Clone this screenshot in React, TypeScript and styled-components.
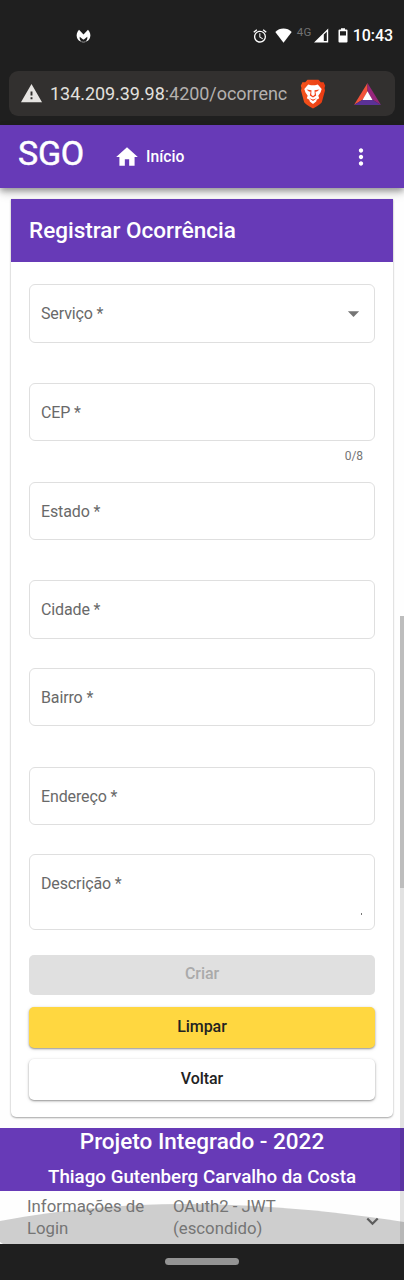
import React from "react";
import styled, { createGlobalStyle } from "styled-components";
import {
  MdAlarm,
  MdArrowDropDown,
  MdHome,
  MdMoreVert,
  MdWarning,
} from "react-icons/md";

const PURPLE = "#673ab7";

const GlobalStyle = createGlobalStyle`
  * { box-sizing: border-box; }
  body {
    margin: 0;
    background: #fff;
    font-family: Roboto, "Liberation Sans", sans-serif;
    overflow: hidden;
  }
`;

const Phone = styled.div`
  position: relative;
  display: flex;
  flex-direction: column;
  width: 404px;
  height: 1280px;
  background: #fefefe;
`;

const SystemTop = styled.div`
  display: flex;
  flex-direction: column;
  height: 125px;
  padding: 0 9px;
  background: #1f1f1f;
`;

const StatusBar = styled.div`
  display: flex;
  align-items: center;
  height: 71px;
  padding-left: 67px;
  padding-right: 2px;
  color: #fff;
  svg { display: block; flex: none; }
`;

const StatusRight = styled.div`
  display: flex;
  align-items: center;
  margin-left: auto;
`;

const Network = styled.span`
  margin: -7px 2px 0 5px;
  font-size: 11.5px;
  line-height: 14px;
  letter-spacing: 0.3px;
  color: #727272;
`;

const Clock = styled.span`
  margin-left: 5px;
  font-size: 16px;
  font-weight: 500;
  line-height: 20px;
  letter-spacing: -0.05px;
`;

const AddressBar = styled.div`
  display: flex;
  align-items: center;
  height: 45px;
  padding: 0 14px 0 11px;
  border-radius: 9px;
  background: #32302f;
  color: #e6e4e2;
  svg { display: block; flex: none; }
`;

const Url = styled.div`
  width: 242px;
  margin-left: 7px;
  font-size: 18px;
  line-height: 24px;
  letter-spacing: -0.05px;
  white-space: nowrap;
  color: #e2e0de;
  span { color: #b4b1af; }
`;

const Spacer = styled.span<{ $width?: number }>`
  flex: ${(p) => (p.$width ? `0 0 ${p.$width}px` : "1")};
`;

const Toolbar = styled.header`
  position: relative;
  z-index: 1;
  display: flex;
  align-items: center;
  height: 63px;
  flex: none;
  padding: 0 30px 0 18px;
  background: ${PURPLE};
  color: #fff;
  box-shadow: 0 3px 6px rgba(0, 0, 0, 0.32), 0 5px 10px rgba(0, 0, 0, 0.14);
  svg { display: block; }
`;

const Brand = styled.div`
  width: 96px;
  margin-top: -7px;
  font-size: 34px;
  line-height: 40px;
  letter-spacing: -0.3px;
  -webkit-text-stroke: 0.5px #fff;
`;

const HomeLink = styled.div`
  display: flex;
  align-items: center;
  gap: 6px;
  flex: 1;
  font-size: 15.7px;
  font-weight: 500;
  line-height: 20px;
`;

const Card = styled.section`
  position: relative;
  z-index: 1;
  display: flex;
  flex-direction: column;
  height: 918px;
  flex: none;
  margin: 11px 11px 0;
  border-radius: 0 0 5px 5px;
  background: #fff;
  box-shadow: 0 1px 2px rgba(0, 0, 0, 0.34), 0 0 2px rgba(0, 0, 0, 0.08);
`;

const CardTitle = styled.h1`
  display: flex;
  align-items: center;
  height: 63px;
  flex: none;
  margin: 0;
  padding: 0 0 2px 18px;
  background: ${PURPLE};
  color: #fff;
  font-size: 22.5px;
  font-weight: 500;
`;

const Form = styled.form`
  display: flex;
  flex-direction: column;
  padding: 22px 18px 0;
`;

const Field = styled.div<{ $height?: number; $gap: number }>`
  display: flex;
  justify-content: space-between;
  height: ${(p) => p.$height ?? 58}px;
  margin-bottom: ${(p) => p.$gap}px;
  padding: 19px 11px 0 11px;
  border: 1px solid #dfdfdf;
  border-radius: 6px;
  color: #696969;
  font-size: 16px;
  line-height: 20px;
  letter-spacing: -0.13px;
  svg { display: block; margin: -4px -4px 0 0; color: #757575; }
`;

const Counter = styled.div`
  height: 41px;
  padding: 8px 12px 0 0;
  text-align: right;
  font-size: 12px;
  line-height: 14px;
  letter-spacing: -0.1px;
  color: #757575;
`;

const ResizeMark = styled.i`
  align-self: flex-end;
  width: 1px;
  height: 2px;
  margin: 0 1px 14px 0;
  background: #777;
`;

const Button = styled.button<{ $bg: string; $flat?: boolean }>`
  height: ${(p) => (p.$flat ? 40 : 41)}px;
  margin: 0 0 ${(p) => (p.$flat ? 12 : 11)}px;
  padding: 0 0 2px;
  border: 0;
  border-radius: 5px;
  background: ${(p) => p.$bg};
  color: ${(p) => (p.$flat ? "#aaa" : "#222")};
  font-family: inherit;
  font-size: 16px;
  font-weight: 500;
  line-height: 38px;
  letter-spacing: -0.05px;
  box-shadow: ${(p) =>
    p.$flat ? "none" : "0 1px 2px rgba(0,0,0,.36), 0 1px 4px rgba(0,0,0,.12)"};
`;

const Footer = styled.footer`
  height: 63px;
  flex: none;
  margin-top: 11px;
  background: ${PURPLE};
  color: #fff;
  text-align: center;
  font-weight: 500;
`;

const Project = styled.div`
  font-size: 22.5px;
  line-height: 27px;
`;

const Author = styled.div`
  padding-top: 9px;
  font-size: 18.75px;
  line-height: 26px;
`;

const LoginPanel = styled.div`
  position: relative;
  display: flex;
  height: 53px;
  flex: none;
  padding: 4px 25px 0 27px;
  color: #757575;
  font-size: 16.8px;
  line-height: 22px;
`;

const Ripple = styled.svg`
  position: absolute;
  left: 0;
  top: 0;
`;

const PanelText = styled.div<{ $width: number }>`
  position: relative;
  width: ${(p) => p.$width}px;
`;

const Chevron = styled.svg`
  position: relative;
  margin: 22px 0 0 auto;
`;

const NavBar = styled.div`
  display: flex;
  align-items: center;
  justify-content: center;
  height: 36px;
  flex: none;
  background: #1f1f1f;
`;

const HomePill = styled.div`
  width: 74px;
  height: 7px;
  margin-top: -1px;
  border-radius: 4px;
  background: #949494;
`;

const ScrollThumb = styled.div`
  position: absolute;
  z-index: 2;
  right: 0;
  top: 616px;
  width: 4px;
  height: 628px;
  background: rgba(0, 0, 0, 0.11);
  &::before {
    content: "";
    display: block;
    height: 272px;
    background: #bdbdbd;
  }
`;

const NotificationIcon = () => (
  <svg width="15" height="14" viewBox="0 0 15 14">
    <path
      fill="#fff"
      d="M3 .8 7.500 5.400 12 .8C14 3 15 5.900 14 8.700c-.8 2.300-2.500 3.700-4.700 4.100 1.600-1.200 2.300-3 2-5L7.900 10.600h-.8L3.700 7.800c-.3 2 .4 3.800 2 5C3.500 12.400 1.800 11 1 8.700 0 5.900 1 3 3 .8Z"
    />
    <path d="M5.600 12.800Q7.500 13.500 9.400 12.800" stroke="#aaa" strokeWidth=".8" fill="none" />
  </svg>
);

const WifiIcon = () => (
  <svg width="17" height="15" viewBox="0 0 17 15">
    <path fill="#fff" d="M8.500 14.700.3 4C2.600 1.700 5.300.6 8.500.6S14.400 1.700 16.700 4Z" />
  </svg>
);

const SignalIcon = () => (
  <svg width="15" height="15" viewBox="0 0 15 15">
    <path fill="#fff" fillRule="evenodd" d="M0 14.500 14.200.4V14.500ZM9.800 6.600V13.100H12.800V3.700Z" />
  </svg>
);

const BatteryIcon = () => (
  <svg width="10" height="15" viewBox="0 0 10 15">
    <path
      fill="#fff"
      fillRule="evenodd"
      d="M3 .3H7V1.600H8.500Q9.500 1.600 9.500 2.600V13.500Q9.500 14.500 8.500 14.500H1.500Q.5 14.500.5 13.500V2.600Q.5 1.600 1.500 1.600H3ZM2 3.200V7.500H8V3.200Z"
    />
  </svg>
);

const BraveIcon = () => (
  <svg width="26" height="30" viewBox="0 0 26 30">
    <defs>
      <linearGradient id="lion" x1="0" x2="1">
        <stop offset="0" stopColor="#f4541c" />
        <stop offset="1" stopColor="#ea3a12" />
      </linearGradient>
    </defs>
    <path
      fill="url(#lion)"
      d="M7.500.7H18.500L20.800 3.200 23.600 3.300 25.200 6.800 24.500 9 25 11.500 21.800 23.200Q20.900 25 13 29.600 5.100 25 4.200 23.200L1 11.500 1.500 9 .8 6.800 2.400 3.300 5.200 3.200Z"
    />
    <path
      fill="#fff"
      d="M8.200 5.500 11 6.200H15L17.800 5.500 21.700 10.100 20.500 13.500 18.300 16.700 19.200 19.300 16.700 20.800 16.200 22.500 13 24.900 9.800 22.500 9.300 20.800 6.800 19.300 7.700 16.700 5.500 13.500 4.300 10.100Z"
    />
    <path
      fill="#f4431a"
      d="m6.500 10.400 5 .9-.3 4.300L13 17.200l1.800-1.600-.3-4.300L19.500 10.400 17 12.600 15.400 12.700 16.200 16.400 13 18.400 9.800 16.400 10.600 12.700 9 12.600ZM9.200 19.200 13 20.600 16.800 19.200 13 22Z"
    />
  </svg>
);

const RewardsIcon = () => (
  <svg width="27" height="24" viewBox="0 0 28 24">
    <path fill="#f2533a" d="M14 .5 0 23.500 9.500 17.500 14 9.500Z" />
    <path fill="#97267c" d="M14 .5 28 23.500 18.500 17.500 14 9.500Z" />
    <path fill="#5b3196" d="M0 23.500 9.300 17.800H18.700L28 23.500Z" />
    <path fill="#fff" d="M14 9.200 19.200 18.100H8.800Z" />
  </svg>
);

export default function App() {
  return (
    <Phone>
      <GlobalStyle />
      <SystemTop>
        <StatusBar>
          <NotificationIcon />
          <StatusRight>
            <MdAlarm size={16} />
            <Spacer $width={7} />
            <WifiIcon />
            <Network>4G</Network>
            <SignalIcon />
            <Spacer $width={9} />
            <BatteryIcon />
            <Clock>10:43</Clock>
          </StatusRight>
        </StatusBar>
        <AddressBar>
          <MdWarning size={23} />
          <Url>
            134.209.39.98<span>:4200/ocorrenc</span>
          </Url>
          <Spacer $width={8} />
          <BraveIcon />
          <Spacer />
          <RewardsIcon />
        </AddressBar>
      </SystemTop>

      <Toolbar>
        <Brand>SGO</Brand>
        <HomeLink>
          <MdHome size={26} />
          Início
        </HomeLink>
        <MdMoreVert size={26} />
      </Toolbar>

      <Card>
        <CardTitle>Registrar Ocorrência</CardTitle>
        <Form>
          <Field $height={59} $gap={40}>
            Serviço *<MdArrowDropDown size={27} />
          </Field>
          <Field $gap={0}>CEP *</Field>
          <Counter>0/8</Counter>
          <Field $gap={40}>Estado *</Field>
          <Field $height={59} $gap={29}>Cidade *</Field>
          <Field $gap={41}>Bairro *</Field>
          <Field $gap={29}>Endereço *</Field>
          <Field $height={76} $gap={25}>
            Descrição *<ResizeMark />
          </Field>
          <Button type="button" $bg="#e0e0e0" $flat>Criar</Button>
          <Button type="button" $bg="#ffd740">Limpar</Button>
          <Button type="button" $bg="#fff">Voltar</Button>
        </Form>
      </Card>

      <Footer>
        <Project>Projeto Integrado - 2022</Project>
        <Author>Thiago Gutenberg Carvalho da Costa</Author>
      </Footer>
      <LoginPanel>
        <Ripple width="404" height="53" viewBox="0 0 404 53">
          <path fill="#cecece" d="M0 30C65 18 125 13 184 13 257 13 335 20 404 31V53H3L0 51Z" />
        </Ripple>
        <PanelText $width={146}>Informações de<br />Login</PanelText>
        <PanelText $width={130}>OAuth2 - JWT<br />(escondido)</PanelText>
        <Chevron width="13" height="9" viewBox="0 0 13 9">
          <path d="M1.300 1.500 6.500 6.800 11.700 1.500" fill="none" stroke="#5c5c5c" strokeWidth="2.200" />
        </Chevron>
      </LoginPanel>
      <NavBar>
        <HomePill />
      </NavBar>
      <ScrollThumb />
    </Phone>
  );
}
